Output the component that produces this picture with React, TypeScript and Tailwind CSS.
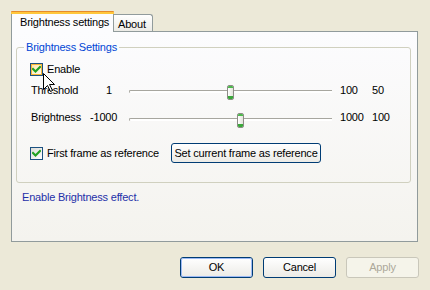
import React from "react";

function Check({ hover = false }: { hover?: boolean }) {
  return (
    <div className="w-[13px] h-[13px] border border-[#1C5180] bg-gradient-to-br from-[#DCDCD7] to-[#FFFFFF] flex items-center justify-center shrink-0">
      <div className={hover ? "w-[11px] h-[11px] border border-[#F8B636] bg-gradient-to-br from-[#FFE6A6] to-[#FFFBEF] flex items-center justify-center" : "w-[11px] h-[11px] flex items-center justify-center"}>
        <svg width="9" height="9" viewBox="0 0 9 9">
          <path d="M1 4 L3.5 6.5 L8 2" stroke="#21A121" strokeWidth="2.2" fill="none" strokeLinecap="square" />
        </svg>
      </div>
    </div>
  );
}

function Slider({ pos }: { pos: number }) {
  return (
    <div className="relative w-[203px] h-[15px] self-end">
      <div className="mt-[5px] h-[3px] bg-white border-t border-l border-[#A7A69F] rounded-l-[2px]" />
      <div className="absolute top-0 w-[7px] h-[15px] rounded-[2px] border border-[#8D8C86] bg-white flex flex-col overflow-hidden" style={{ left: pos }}>
        <div className="h-[2px] bg-[#4DB84D]" />
        <div className="flex-1 bg-gradient-to-r from-[#FFFFFF] to-[#E4E3DC]" />
        <div className="h-[3px] bg-[#3AA83A]" />
      </div>
    </div>
  );
}

function Button({ children, def = false, disabled = false }: { children: React.ReactNode; def?: boolean; disabled?: boolean }) {
  if (disabled) {
    return (
      <div className="w-[73px] h-[21px] rounded-[3px] border border-[#C9C7BA] bg-[#F5F4EA] text-[#ACA899] flex items-center justify-center">
        {children}
      </div>
    );
  }
  return (
    <div className="w-[73px] h-[21px] rounded-[3px] border border-[#003C74] bg-gradient-to-b from-[#FFFFFF] to-[#ECEBE6] flex items-center justify-center">
      <div className={def ? "w-full h-full rounded-[2px] border border-[#9DBAF4] flex items-center justify-center" : "w-full h-full flex items-center justify-center"}>
        {children}
      </div>
    </div>
  );
}

export default function App() {
  return (
    <div
      className="relative w-[430px] h-[290px] bg-[#ECE9D8] pt-[11px] pl-[11px] text-[11px] leading-[13px] text-black tracking-[-0.2px]"
      style={{ fontFamily: '"Liberation Sans", Arial, sans-serif' }}
    >
      {/* tabs */}
      <div className="flex items-end h-[20px]">
        <div className="relative z-10 w-[103px] h-[21px] -mb-[1px] bg-[#FCFCFE] border-l border-r border-[#919B9C] rounded-t-[3px] flex flex-col">
          <div className="h-[1px] bg-[#E68B2C] rounded-t-[3px] -mx-[1px]" />
          <div className="h-[2px] bg-[#FFC73C] -mx-[1px]" />
          <div className="pl-[8px] pt-[2px]">Brightness settings</div>
        </div>
        <div className="w-[39px] h-[17px] border-t border-r border-[#919B9C] rounded-tr-[3px] bg-gradient-to-b from-[#FFFFFF] to-[#ECEBE6] pl-[4px] pt-[3px]">
          About
        </div>
      </div>

      {/* panel */}
      <div className="w-[407px] h-[211px] border border-[#919B9C] bg-gradient-to-b from-[#FCFCFE] to-[#F4F3EE] pl-[4px] pt-[9px]">
        <fieldset className="w-[395px] h-[142px] border border-[#D0D0BF] rounded-[3px] pl-[13px]">
          <legend className="ml-[-6px] px-[2px] text-[#0046D5]">Brightness Settings</legend>
          <div className="flex items-center h-[13px] mt-[9px]">
            <Check hover />
            <span className="ml-[4px]">Enable</span>
          </div>
          <div className="flex items-center h-[20px] mt-[4px] pl-[1px]">
            <span className="w-[75px]">Threshold</span>
            <span className="w-[23px]">1</span>
            <Slider pos={98} />
            <span className="ml-[8px] w-[32px]">100</span>
            <span>50</span>
          </div>
          <div className="flex items-center h-[21px] mt-[7px] pl-[1px]">
            <span className="w-[59px]">Brightness</span>
            <span className="w-[39px]">-1000</span>
            <Slider pos={108} />
            <span className="ml-[8px] w-[32px]">1000</span>
            <span>100</span>
          </div>
          <div className="flex items-center h-[20px] mt-[15px]">
            <Check />
            <span className="ml-[4px] w-[124px]">First frame as reference</span>
            <div className="w-[150px] h-[20px] rounded-[3px] border border-[#003C74] bg-gradient-to-b from-[#FFFFFF] to-[#ECEBE6] flex items-center justify-center">
              Set current frame as reference
            </div>
          </div>
        </fieldset>
        <div className="mt-[8px] pl-[6px] text-[#1E2FA8]">Enable Brightness effect.</div>
      </div>

      {/* buttons */}
      <div className="flex justify-end gap-[10px] pr-[11px] mt-[15px]">
        <Button def>OK</Button>
        <Button>Cancel</Button>
        <Button disabled>Apply</Button>
      </div>

      {/* mouse cursor */}
      <svg className="absolute left-[43px] top-[73px]" width="13" height="20" viewBox="0 0 13 20">
        <path d="M0.5 0.5 L0.5 16.5 L4.5 12.5 L7.5 18.5 L9.5 17.5 L6.5 11.5 L11.5 11.5 Z" fill="white" stroke="black" strokeWidth="1" />
      </svg>
    </div>
  );
}
